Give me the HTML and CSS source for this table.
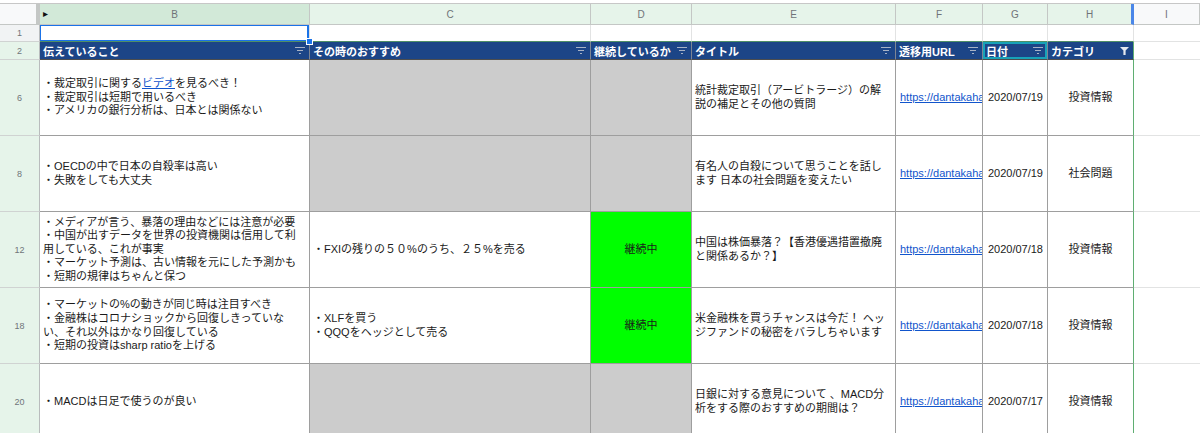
FILE: index.html
```html
<!DOCTYPE html>
<html lang="ja">
<head>
<meta charset="utf-8">
<title>Sheet</title>
<link rel="stylesheet" href="styles.css">
</head>
<body>
<div class="sheet">
  <div class="top-strip"></div>
  <div class="grid">
    <!-- column letters -->
    <div class="corner"></div>
    <div class="col-hd col-hd-active"><span class="tri">&#9656;</span>B</div>
    <div class="col-hd">C</div>
    <div class="col-hd">D</div>
    <div class="col-hd">E</div>
    <div class="col-hd">F</div>
    <div class="col-hd">G</div>
    <div class="col-hd col-hd-last">H</div>
    <div class="col-hd col-hd-off">I</div>

    <!-- row 1 -->
    <div class="row-hd row-hd-off">1</div>
    <div class="c1 c1-active"><span class="handle"></span></div>
    <div class="c1"></div>
    <div class="c1"></div>
    <div class="c1"></div>
    <div class="c1"></div>
    <div class="c1"></div>
    <div class="c1 c1-last"></div>
    <div class="cx"></div>

    <!-- row 2 header -->
    <div class="row-hd">2</div>
    <div class="hd"><span>伝えていること</span><svg class="flt" viewBox="0 0 10 7"><path d="M0 0.5H10M2 3.5H8M4 6.5H6"/></svg></div>
    <div class="hd"><span>その時のおすすめ</span><svg class="flt" viewBox="0 0 10 7"><path d="M0 0.5H10M2 3.5H8M4 6.5H6"/></svg></div>
    <div class="hd"><span>継続しているか</span><svg class="flt" viewBox="0 0 10 7"><path d="M0 0.5H10M2 3.5H8M4 6.5H6"/></svg></div>
    <div class="hd"><span>タイトル</span><svg class="flt" viewBox="0 0 10 7"><path d="M0 0.5H10M2 3.5H8M4 6.5H6"/></svg></div>
    <div class="hd"><span>透移用URL</span><svg class="flt" viewBox="0 0 10 7"><path d="M0 0.5H10M2 3.5H8M4 6.5H6"/></svg></div>
    <div class="hd hd-sel"><span>日付</span><svg class="flt" viewBox="0 0 10 7"><path d="M0 0.5H10M2 3.5H8M4 6.5H6"/></svg></div>
    <div class="hd hd-last"><span>カテゴリ</span><svg class="funnel" viewBox="0 0 9 8"><path d="M0 0H9L5.6 3.6V8H3.4V3.6Z"/></svg></div>
    <div class="cx"></div>

    <!-- row 6 -->
    <div class="row-hd">6</div>
    <div class="cell"><span class="txt">・裁定取引に関する<a class="link" href="#">ビデオ</a>を見るべき！<br>・裁定取引は短期で用いるべき<br>・アメリカの銀行分析は、日本とは関係ない</span></div>
    <div class="cell gray"></div>
    <div class="cell gray"></div>
    <div class="cell"><span class="txt">統計裁定取引（アービトラージ）の解<br>説の補足とその他の質問</span></div>
    <div class="cell url"><a class="link url-link" href="#">https://dantakaha</a></div>
    <div class="cell date"><span class="txt">2020/07/19</span></div>
    <div class="cell center last"><span class="txt">投資情報</span></div>
    <div class="cx"></div>

    <!-- row 8 -->
    <div class="row-hd">8</div>
    <div class="cell"><span class="txt">・OECDの中で日本の自殺率は高い<br>・失敗をしても大丈夫</span></div>
    <div class="cell gray"></div>
    <div class="cell gray"></div>
    <div class="cell"><span class="txt">有名人の自殺について思うことを話し<br>ます 日本の社会問題を変えたい</span></div>
    <div class="cell url"><a class="link url-link" href="#">https://dantakaha</a></div>
    <div class="cell date"><span class="txt">2020/07/19</span></div>
    <div class="cell center last"><span class="txt">社会問題</span></div>
    <div class="cx"></div>

    <!-- row 12 -->
    <div class="row-hd">12</div>
    <div class="cell"><span class="txt">・メディアが言う、暴落の理由などには注意が必要<br>・中国が出すデータを世界の投資機関は信用して利<br>用している、これが事実<br>・マーケット予測は、古い情報を元にした予測かも<br>・短期の規律はちゃんと保つ</span></div>
    <div class="cell"><span class="txt">・FXIの残りの５０%のうち、２５%を売る</span></div>
    <div class="cell green center"><span class="txt">継続中</span></div>
    <div class="cell"><span class="txt">中国は株価暴落？【香港優遇措置撤廃<br>と関係あるか？】</span></div>
    <div class="cell url"><a class="link url-link" href="#">https://dantakaha</a></div>
    <div class="cell date"><span class="txt">2020/07/18</span></div>
    <div class="cell center last"><span class="txt">投資情報</span></div>
    <div class="cx"></div>

    <!-- row 18 -->
    <div class="row-hd">18</div>
    <div class="cell"><span class="txt">・マーケットの%の動きが同じ時は注目すべき<br>・金融株はコロナショックから回復しきっていな<br>い、それ以外はかなり回復している<br>・短期の投資はsharp ratioを上げる</span></div>
    <div class="cell"><span class="txt">・XLFを買う<br>・QQQをヘッジとして売る</span></div>
    <div class="cell green center"><span class="txt">継続中</span></div>
    <div class="cell"><span class="txt">米金融株を買うチャンスは今だ！ ヘッ<br>ジファンドの秘密をバラしちゃいます</span></div>
    <div class="cell url"><a class="link url-link" href="#">https://dantakaha</a></div>
    <div class="cell date"><span class="txt">2020/07/18</span></div>
    <div class="cell center last"><span class="txt">投資情報</span></div>
    <div class="cx"></div>

    <!-- row 20 -->
    <div class="row-hd">20</div>
    <div class="cell"><span class="txt">・MACDは日足で使うのが良い</span></div>
    <div class="cell gray"></div>
    <div class="cell gray"></div>
    <div class="cell"><span class="txt">日銀に対する意見について 、MACD分<br>析をする際のおすすめの期間は？</span></div>
    <div class="cell url"><a class="link url-link" href="#">https://dantakaha</a></div>
    <div class="cell date"><span class="txt">2020/07/17</span></div>
    <div class="cell center last"><span class="txt">投資情報</span></div>
    <div class="cx"></div>
  </div>
</div>
</body>
</html>
```

FILE: styles.css
```css
* { box-sizing: border-box; }

html, body {
  margin: 0;
  padding: 0;
  background: #ffffff;
}

body {
  width: 1200px;
  height: 433px;
  overflow: hidden;
  font-family: "Liberation Sans", "Noto Sans CJK JP", Arial, sans-serif;
  font-size: 11px;
  color: #1a1a1a;
}

.sheet {
  width: 1200px;
}

.top-strip {
  height: 4px;
  background: #ffffff;
  border-bottom: 1px solid #c7c7c7;
}

.grid {
  display: grid;
  grid-template-columns: 40px 270px 281px 101px 204px 87px 65px 86px 1fr;
  grid-template-rows: 21px 17px 18px 76px 76px 76px 76px 76px;
}

/* column letters */
.corner {
  background: #f8f9fa;
  border-right: 4px solid #c4c7c5;
  border-bottom: 1px solid #c4c7c5;
}

.col-hd {
  position: relative;
  display: flex;
  align-items: center;
  justify-content: center;
  background: #e6f4ea;
  border-right: 1px solid #c4c7c5;
  border-bottom: 1px solid #c4c7c5;
  color: #6f7378;
  font-size: 10px;
}

.col-hd-active {
  background: #d2e9d8;
}

.col-hd-last {
  border-right: 3px solid #4a86e8;
}

.col-hd-off {
  background: #f8f9fa;
}

.tri {
  position: absolute;
  left: 3px;
  top: 4px;
  color: #111111;
  font-size: 10px;
}

/* row numbers */
.row-hd {
  display: flex;
  align-items: center;
  justify-content: center;
  background: #e6f4ea;
  border-right: 1px solid #b9bcbd;
  border-bottom: 1px solid #d0d3d2;
  color: #70757a;
  font-size: 9px;
}

.row-hd-off {
  background: #f1f3f4;
}

/* row 1 */
.c1 {
  position: relative;
  background: #ffffff;
  border-right: 1px solid #e2e3e3;
  border-bottom: 1px solid #4f8f66;
}

.c1-active {
  box-shadow: inset 0 0 0 1px #1a73e8, inset -1px 0 0 1px #1a73e8;
}

.handle {
  position: absolute;
  right: -4px;
  bottom: -4px;
  width: 7px;
  height: 7px;
  background: #1a73e8;
  border: 1px solid #ffffff;
  z-index: 2;
}

.cx {
  background: #ffffff;
  border-bottom: 1px solid #e2e3e3;
}

/* header row */
.hd {
  display: flex;
  align-items: center;
  justify-content: space-between;
  padding: 0 4px 0 3px;
  background: #1c4587;
  color: #ffffff;
  font-weight: bold;
  font-size: 11px;
  white-space: nowrap;
  overflow: hidden;
  border-right: 1px solid #7d8593;
  border-bottom: 1px solid #4d4d4d;
}

.hd-sel {
  box-shadow: inset 0 0 0 2px #17a2b8;
}

.hd-last {
  border-right: 1px solid #5fae72;
}

.flt {
  flex: none;
  width: 10px;
  height: 7px;
}

.flt path {
  stroke: #a7b2c6;
  stroke-width: 1;
  fill: none;
}

.funnel {
  flex: none;
  width: 9px;
  height: 8px;
}

.funnel path {
  fill: #e4e8ef;
}

/* data cells */
.cell {
  display: flex;
  align-items: center;
  min-width: 0;
  padding: 0 3px;
  background: #ffffff;
  border-right: 1px solid #9e9e9e;
  border-bottom: 1px solid #9e9e9e;
  line-height: 13.6px;
  white-space: nowrap;
  overflow: hidden;
}

.txt {
  display: block;
}

.cell.last {
  border-right: 1px solid #5fae72;
}

.gray {
  background: #cccccc;
}

.green {
  background: #00ff00;
}

.center {
  justify-content: center;
  text-align: center;
}

.date {
  justify-content: flex-end;
  padding-right: 4px;
}

.url {
  padding-left: 4px;
  padding-right: 0;
}

.link {
  color: #1155cc;
  text-decoration: underline;
}

.url-link {
  display: block;
  overflow: hidden;
  white-space: nowrap;
}
```
